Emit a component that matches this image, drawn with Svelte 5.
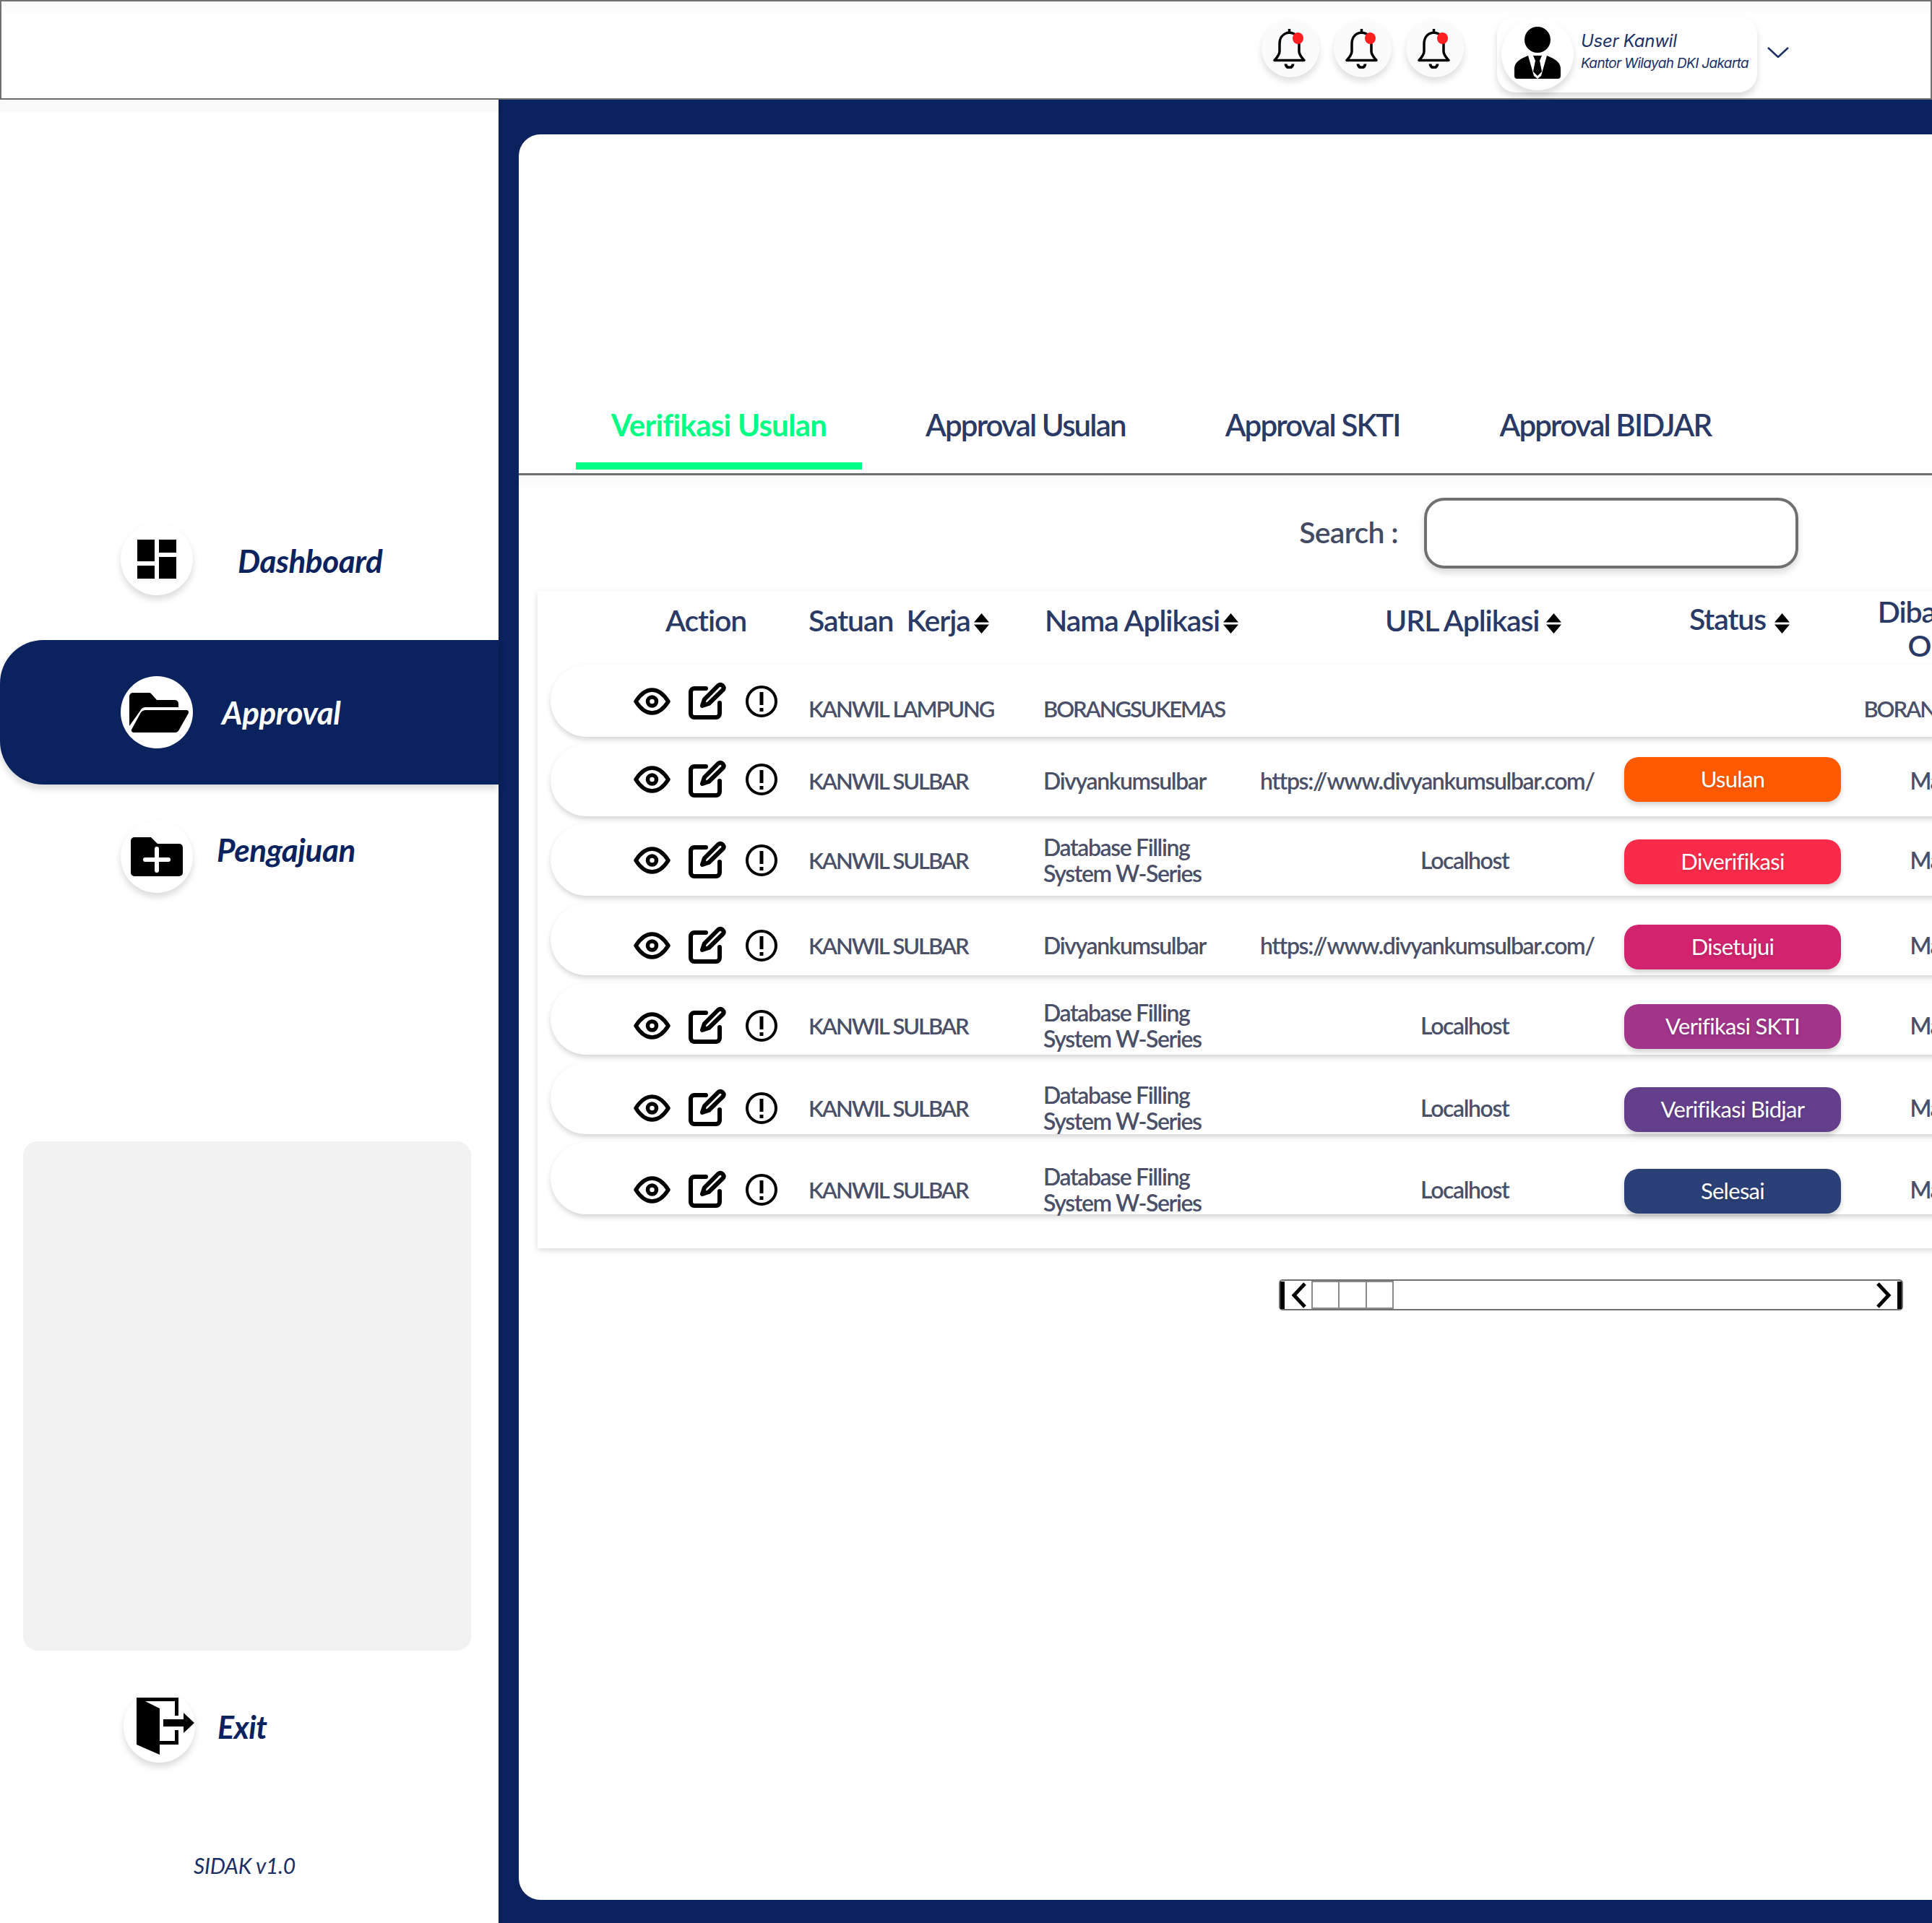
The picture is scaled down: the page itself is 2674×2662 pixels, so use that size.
<script>
  const tabs = ['Approval Usulan', 'Approval SKTI', 'Approval BIDJAR'];
  const url = 'https://www.divyankumsulbar.com/';
  const db = ['Database Filling', 'System W-Series'];
  const dv = ['Divyankumsulbar'];
  const rows = [
    { sat: 'KANWIL LAMPUNG', nama: ['BORANGSUKEMAS'], owner: 'BORANGSUKEMAS', pad: 0, first: true },
    { sat: 'KANWIL SULBAR', nama: dv, url, status: 'Usulan', color: '#ff5a00', owner: 'Mahendra', pad: 2, second: true },
    { sat: 'KANWIL SULBAR', nama: db, local: true, status: 'Diverifikasi', color: '#f92b4b', owner: 'Mahendra', pad: 2 },
    { sat: 'KANWIL SULBAR', nama: dv, url, status: 'Disetujui', color: '#d2236f', owner: 'Mahendra', pad: 18 },
    { sat: 'KANWIL SULBAR', nama: db, local: true, status: 'Verifikasi SKTI', color: '#a03589', owner: 'Mahendra', pad: 18 },
    { sat: 'KANWIL SULBAR', nama: db, local: true, status: 'Verifikasi Bidjar', color: '#643f8b', owner: 'Mahendra', pad: 27 },
    { sat: 'KANWIL SULBAR', nama: db, local: true, status: 'Selesai', color: '#2b4076', owner: 'Mahendra', pad: 30 }
  ];
</script>

{#snippet bell()}
  <div class="bell">
    <svg width="45" height="56" viewBox="0 0 45 56" fill="none" stroke="#000">
      <path d="M22.5 1V6C12 7 9 15 9 22V32C9 37 5 41 2 44.5H43C40 41 36 37 36 32V22C36 15 33 7 22.5 6" stroke-width="3.5" stroke-linejoin="round"/>
      <path d="M17.5 49.5a5 5 0 0 0 10 0" stroke-width="4"/>
      <ellipse cx="34.5" cy="14" rx="7.5" ry="8" fill="#ff1f1f" stroke="none"/>
    </svg>
  </div>
{/snippet}

{#snippet sort()}
  <svg class="sort" width="21" height="28" viewBox="0 0 21 28"><path d="M10.5 0L21 12.5H0Z M0 15.5H21L10.5 28Z"/></svg>
{/snippet}

<div class="page">
  <header class="topbar">
    {@render bell()}
    {@render bell()}
    {@render bell()}
    <div class="user">
      <div class="avatar">
        <svg width="64" height="72" viewBox="0 0 64 72">
          <circle cx="32" cy="18" r="18"/>
          <path d="M4 72a4 4 0 0 1-4-4V58C0 48 10 44 19 40L27 68L32 72L37 68L45 40C54 44 64 48 64 58V68a4 4 0 0 1-4 4Z"/>
          <path d="M26 40H38L35 47L38 62L32 68L26 62L29 47Z"/>
        </svg>
      </div>
      <div class="who">
        <div class="name">User Kanwil</div>
        <div class="office">Kantor Wilayah DKI Jakarta</div>
      </div>
    </div>
    <svg class="chev" width="30" height="15" viewBox="0 0 30 15" fill="none" stroke="#1a2f66" stroke-width="2.5"><path d="M1 1L15 14L29 1"/></svg>
  </header>

  <div class="shell">
    <aside class="side">
      <div class="item dash">
        <div class="round">
          <svg width="54" height="54" viewBox="0 0 54 54"><path d="M0 0H24V30H0Z M30 0H54V18H30Z M0 36H24V54H0Z M30 24H54V54H30Z"/></svg>
        </div>
        <span class="lab">Dashboard</span>
      </div>
      <div class="item active">
        <div class="round">
          <svg width="82" height="55" viewBox="0 0 82 55"><path d="M0 5a5 5 0 0 1 5-5H27a4 4 0 0 1 3 1L38 10H63a5 5 0 0 1 5 5V20H22a8 8 0 0 0-7 5L0 46Z"/><path d="M22 24H79a3 3 0 0 1 3 4L69 51a7 7 0 0 1-6 4H6a3 3 0 0 1-3-4L15 29a8 8 0 0 1 7-5Z"/></svg>
        </div>
        <span class="lab">Approval</span>
      </div>
      <div class="item peng">
        <div class="round">
          <svg width="72" height="54" viewBox="0 0 72 54"><path d="M0 5a5 5 0 0 1 5-5H28L37 9H67a5 5 0 0 1 5 5V49a5 5 0 0 1-5 5H5a5 5 0 0 1-5-5Z"/><path d="M20 31H52M36 16V46" stroke="#fff" stroke-width="6" stroke-linecap="round"/></svg>
        </div>
        <span class="lab">Pengajuan</span>
      </div>
      <div class="blank"></div>
      <div class="item exit">
        <div class="round">
          <svg width="80" height="80" viewBox="0 0 80 80"><path d="M0 0H58V25H53V5H12L32 15V60H53V45H58V65H32V79L0 65Z"/><path d="M37 30H65V21L80 35L65 49V40H37Z"/></svg>
        </div>
        <span class="lab">Exit</span>
      </div>
      <div class="ver">SIDAK v1.0</div>
    </aside>

    <main class="main">
      <section class="panel">
        <nav class="tabs">
          <div class="tab on">Verifikasi Usulan</div>
          {#each tabs as t}
            <div class="tab">{t}</div>
          {/each}
        </nav>

        <div class="search">
          <label for="q">Search :</label>
          <input id="q" type="text" />
        </div>

        <div class="card">
          <div class="head">
            <div class="h-action">Action</div>
            <div class="h-sat">Satuan&nbsp; Kerja{@render sort()}</div>
            <div class="h-nama">Nama Aplikasi{@render sort()}</div>
            <div class="h-url">URL Aplikasi{@render sort()}</div>
            <div class="h-status">Status{@render sort()}</div>
            <div class="h-owner">Dibangun<br />Oleh</div>
          </div>

          <div class="rows">
            {#each rows as r}
              <div class="row" class:first={r.first} class:second={r.second} style="padding-top:{r.pad}px">
                <div></div>
                <div class="act">
                  <svg width="51" height="38" viewBox="0 0 51 38" fill="none" stroke="#000" stroke-width="5.5"><path d="M3 19C10 8 18 3 25.5 3S41 8 48 19C41 30 33 35 25.5 35S10 30 3 19Z" stroke-linejoin="round"/><circle cx="25.5" cy="19" r="6"/></svg>
                  <svg width="52" height="52" viewBox="0 0 52 52" fill="none" stroke="#000" stroke-width="6" stroke-linecap="round" stroke-linejoin="round"><path d="M24 9H8a5 5 0 0 0-5 5V44a5 5 0 0 0 5 5H38a5 5 0 0 0 5-5V29"/><path d="M19 33L22 24L41 5Q44 2.500 47 5Q50 8 47.500 11L28 30Z"/></svg>
                  <svg width="44" height="44" viewBox="0 0 44 44" fill="none" stroke="#000"><circle cx="22" cy="22" r="20" stroke-width="4"/><path d="M22 9V27" stroke-width="5"/><path d="M22 31V36" stroke-width="5"/></svg>
                </div>
                <div class="txt caps">{r.sat}</div>
                <div class="txt two" class:caps={r.first}>
                  {#each r.nama as n}<div>{n}</div>{/each}
                </div>
                <div class="txt">
                  {#if r.url}<span class="link">{r.url}</span>{:else if r.local}<span class="local">Localhost</span>{/if}
                </div>
                <div>
                  {#if r.status}<div class="badge" style="background:{r.color}">{r.status}</div>{/if}
                </div>
                <div class="txt owner" class:caps={r.first}>{r.owner}</div>
              </div>
            {/each}
          </div>
        </div>

        <div class="scroll">
          <span class="bar"></span>
          <svg class="sc-l" width="22" height="36" viewBox="0 0 22 36" fill="none" stroke="#000" stroke-width="5"><path d="M19 2L4 18L19 34"/></svg>
          <div class="thumb"><i></i><i></i><i></i></div>
          <svg class="sc-r" width="22" height="36" viewBox="0 0 22 36" fill="none" stroke="#000" stroke-width="5"><path d="M3 2L18 18L3 34"/></svg>
          <span class="bar"></span>
        </div>
      </section>
    </main>
  </div>
</div>

<style>
  :global(body) { margin: 0; background: #fff; }
  .page {
    width: 2674px; height: 2662px; overflow: hidden;
    display: flex; flex-direction: column;
    font-family: "Lato", "Liberation Sans", sans-serif;
  }
  .topbar {
    box-sizing: border-box; height: 138px; flex: none;
    border: 2px solid #707070;
    background: linear-gradient(#f9f9f9, #fff 20px);
    display: flex; align-items: flex-start; justify-content: flex-end;
    padding: 25px 196px 0 0;
  }
  .bell {
    width: 80px; height: 80px; border-radius: 50%; background: #fbfbfb; margin-right: 20px;
    display: flex; align-items: center; justify-content: center;
    box-shadow: 0 6px 10px rgba(0,0,0,.13);
  }
  .bell svg { margin-left: -3px; }
  .bell:nth-child(3) { margin-right: 46px; }
  .user {
    margin-top: -5px; width: 360px; height: 106px; box-sizing: border-box; background: #fff;
    border-radius: 26px; display: flex; align-items: center; padding-left: 6px;
    box-shadow: 0 6px 10px rgba(0,0,0,.14);
  }
  .avatar {
    width: 100px; height: 100px; border-radius: 50%; background: #fff; flex: none;
    display: flex; align-items: flex-start; justify-content: center; padding-top: 0;
    box-shadow: 0 6px 10px rgba(0,0,0,.14);
  }
  .avatar svg { margin-top: 12px; }
  .who { margin-left: 10px; color: #1a2f66; font-family: "Inter", sans-serif; font-style: italic; }
  .name { font-size: 24px; line-height: 30px; letter-spacing: -.25px; margin-top: -9px; }
  .office { font-size: 19px; line-height: 24px; margin-top: 4px; letter-spacing: -.65px; white-space: nowrap; }
  .chev { margin: 38px 0 0 14px; }

  .shell { flex: 1; display: flex; min-height: 0; }
  .side {
    width: 690px; flex: none; background: linear-gradient(#f9f9f9 17px, #fff 17px); position: relative;
    display: flex; flex-direction: column; box-shadow: 2px 0 6px rgba(0,0,0,.12);
  }
  .item { display: flex; align-items: center; padding-left: 167px; flex: none; }
  .round {
    width: 100px; height: 100px; border-radius: 50%; background: #fff; flex: none;
    display: flex; align-items: center; justify-content: center;
    box-shadow: 0 6px 10px rgba(0,0,0,.14);
  }
  .lab {
    font-weight: 700; font-style: italic; font-size: 44px; color: #0a225e; letter-spacing: -.4px;
  }
  .dash { margin-top: 586px; }
  .dash .lab { margin-left: 62px; padding-top: 4px; }
  .active {
    margin-top: 62px; height: 200px; background: #0a225e; border-radius: 60px 0 0 60px;
    box-shadow: 0 6px 10px rgba(0,0,0,.15);
  }
  .active .round { box-shadow: none; box-sizing: border-box; padding-left: 6px; }
  .active .lab { color: #fff; margin-left: 40px; }
  .peng { margin-top: 50px; }
  .peng .lab { margin-left: 33px; padding-bottom: 20px; }
  .blank { margin: 344px 38px 0 32px; height: 705px; background: #f2f2f2; border-radius: 20px; flex: none; }
  .exit { margin-top: 55px; padding-left: 171px; }
  .exit .lab { margin-left: 31px; font-size: 43px; }
  .exit .round { width: 99px; box-sizing: border-box; padding-left: 17px; }
  .ver {
    margin: 124px 0 0 268px; font-size: 30px; font-style: italic; color: #1a2f66; letter-spacing: -.3px;
    line-height: 36px;
  }

  .main { flex: 1; min-width: 0; background: #0a225e; box-sizing: border-box; padding: 48px 0 32px 28px; display: flex; }
  .panel { flex: 1; min-width: 0; background: #fff; border-radius: 30px 0 0 30px; overflow: hidden; display: flex; flex-direction: column; }

  .tabs {
    height: 469px; box-sizing: content-box; flex: none; display: flex; align-items: flex-end;
    border-bottom: 3px solid #707070; padding-left: 79px;
  }
  .tab {
    font-size: 42px; line-height: 50px; font-weight: 600; color: #2a3a66; letter-spacing: -1.85px;
    padding: 0 0 27px 0; margin: 0 0 5px 138px; border-bottom: 10px solid transparent; white-space: nowrap;
  }
  .tab.on { color: #00ff85; font-weight: 700; letter-spacing: -.75px; margin-left: 0; margin-right: -51px; width: 396px; box-sizing: border-box; text-align: center; border-bottom-color: #00ff85; }
  .tab.on + .tab { margin-left: 139px; }

  .search {
    background: linear-gradient(#f9f9f9, #fff 20px);
    display: flex; align-items: center; justify-content: flex-end; flex: none;
    padding: 31px 185px 0 0; gap: 36px;
  }
  .search label { font-size: 41px; font-weight: 600; color: #434b63; letter-spacing: -.7px; margin-top: -4px; }
  .search input {
    width: 518px; height: 98px; box-sizing: border-box; border: 4px solid #707070; border-radius: 28px;
    background: #fff; outline: none; box-shadow: 0 6px 10px rgba(0,0,0,.14);
  }

  .card {
    margin: 31px -30px 0 26px; flex: none; height: 910px; box-sizing: border-box; background: #fff;
    box-shadow: 0 3px 8px rgba(0,0,0,.14);
  }
  .head {
    height: 102px; box-sizing: border-box; margin-left: 18px;
    display: grid; grid-template-columns: 357px 325px 298px 506px 300px 268px; grid-template-rows: 80px; align-items: center;
    font-size: 41px; font-weight: 600; color: #2a3a66; letter-spacing: -1.1px; white-space: nowrap;
  }
  .sort { vertical-align: -3px; margin-left: 5px; }
  .h-action { padding-left: 159px; }
  .h-nama { padding-left: 2px; }
  .h-url { padding-left: 175px; }
  .h-url .sort { margin-left: 10px; }
  .h-status { padding-left: 90px; margin-top: -4px; }
  .h-status .sort { margin-left: 12px; vertical-align: -5px; }
  .h-owner { text-align: center; line-height: 47px; margin-top: 24px; }

  .rows { display: flex; flex-direction: column; gap: 10.7px; margin-left: 18px; }
  .row {
    height: 99.5px; box-sizing: border-box; width: 2200px; background: #fff; border-radius: 50px 0 0 50px;
    display: grid; grid-template-columns: 115px 242px 325px 298px 506px 300px 324px; align-items: center;
    box-shadow: 0 4px 7px rgba(0,0,0,.16);
  }
  .act { display: flex; align-items: center; gap: 25px; }
  .act svg:last-child { margin-left: 2px; }
  .act svg:nth-child(2) { margin-bottom: 2px; }
  .first .act { padding-top: 2px; }
  .second .act { margin-top: -4px; }
  .second .badge { margin-top: -3px; }
  .txt {
    font-size: 32px; line-height: 36px; font-weight: 600; color: #4a5068; letter-spacing: -1.4px; white-space: nowrap;
  }
  .caps { font-size: 31px; letter-spacing: -2.1px; word-spacing: 1px; }
  .first .txt { padding-top: 23px; }
  .first .owner { padding-right: 10px; }
  .link { margin-left: 2px; }
  .local { margin-left: 224px; }
  .badge {
    width: 300px; height: 62px; box-sizing: border-box; padding-bottom: 2px; border-radius: 20px; color: #fff; font-size: 31px; letter-spacing: -.7px;
    display: flex; align-items: center; justify-content: center; margin-top: 3px;
    box-shadow: 0 4px 7px rgba(0,0,0,.18); text-shadow: 0 2px 4px rgba(0,0,0,.16);
  }
  .owner { text-align: center; }

  .scroll {
    margin: 43px 0 0 1052px; width: 864px; height: 43px; box-sizing: border-box; flex: none;
    border: 2.500px solid #707070; border-radius: 5px; display: flex; align-items: center;
  }
  .bar { width: 6px; height: 38px; background: #000; flex: none; }
  .sc-l { margin-left: 9px; flex: none; }
  .thumb { margin-left: 6px; width: 114px; height: 100%; display: flex; flex: none; box-sizing: border-box; border: 2.500px solid #8a8a8a; }
  .thumb i { flex: 1; border-right: 2px solid #8a8a8a; }
  .thumb i:last-child { border-right: 0; }
  .sc-r { margin-left: auto; margin-right: 8px; flex: none; }
</style>
